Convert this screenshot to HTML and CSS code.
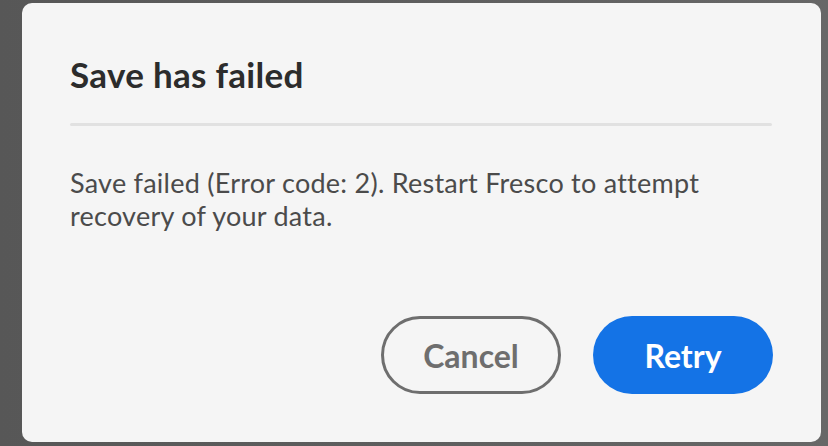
FILE: index.html
```html
<!DOCTYPE html>
<html lang="en">
<head>
<meta charset="utf-8">
<title>Save has failed</title>
<link rel="stylesheet" href="styles.css">
</head>
<body>
<div class="backdrop">
  <div class="dialog" role="alertdialog" aria-labelledby="dlg-title">
    <h1 class="dialog-title" id="dlg-title">Save has failed</h1>
    <div class="dialog-divider"></div>
    <p class="dialog-message">Save failed (Error code: 2). Restart Fresco to attempt recovery of your data.</p>
    <div class="dialog-actions">
      <button class="btn btn-secondary" type="button">Cancel</button>
      <button class="btn btn-primary" type="button">Retry</button>
    </div>
  </div>
</div>
</body>
</html>
```
FILE: styles.css
```css
html, body {
  margin: 0;
  padding: 0;
  width: 828px;
  height: 446px;
  overflow: hidden;
}
body {
  background: linear-gradient(90deg, #575757 0%, #5e5e5e 50%, #676767 100%);
  font-family: Lato, "Open Sans", sans-serif;
}
.backdrop {
  padding: 3px 0 0 22px;
}
.dialog {
  box-sizing: border-box;
  width: 799px;
  height: 439px;
  background: #f5f5f5;
  border-radius: 10px;
  padding: 51px 48px 48px 48px;
  display: flex;
  flex-direction: column;
}
.dialog-title {
  margin: 0;
  font-size: 35px;
  line-height: 40px;
  font-weight: 700;
  letter-spacing: 0.3px;
  color: #2c2c2c;
}
.dialog-divider {
  height: 3px;
  background: #e1e1e1;
  border-radius: 2px;
  margin-top: 29px;
  margin-right: 1px;
}
.dialog-message {
  margin: 40px 0 0;
  font-size: 27px;
  line-height: 33px;
  letter-spacing: 0.25px;
  color: #4b4b4b;
}
.dialog-actions {
  margin-top: auto;
  display: flex;
  justify-content: flex-end;
  gap: 32px;
}
.btn {
  box-sizing: border-box;
  width: 180px;
  height: 78px;
  border-radius: 39px;
  font-family: Lato, "Open Sans", sans-serif;
  font-size: 32px;
  font-weight: 700;
  cursor: pointer;
  padding: 0;
}
.btn-secondary {
  background: transparent;
  border: 3px solid #6e6e6e;
  color: #6e6e6e;
}
.btn-primary {
  background: #1473e6;
  border: none;
  color: #ffffff;
}
```
